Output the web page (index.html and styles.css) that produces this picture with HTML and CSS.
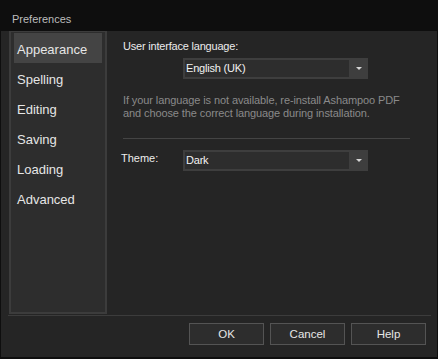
FILE: index.html
```html
<!DOCTYPE html>
<html>
<head>
<meta charset="utf-8">
<link rel="stylesheet" href="styles.css">
</head>
<body>
<div class="window">
  <div class="titlebar">Preferences</div>
  <div class="frame">
    <div class="main">
      <div class="sidebar">
        <div class="nav-item selected">Appearance</div>
        <div class="nav-item">Spelling</div>
        <div class="nav-item">Editing</div>
        <div class="nav-item">Saving</div>
        <div class="nav-item">Loading</div>
        <div class="nav-item">Advanced</div>
      </div>
      <div class="content">
        <div class="label">User interface language:</div>
        <div class="combo lang-combo">
          <div class="combo-field">English (UK)</div>
          <div class="combo-arrow"><span class="tri"></span></div>
        </div>
        <div class="info">If your language is not available, re-install Ashampoo PDF<br>and choose the correct language during installation.</div>
        <div class="hsep"></div>
        <div class="theme-row">
          <div class="theme-label">Theme:</div>
          <div class="combo">
            <div class="combo-field">Dark</div>
            <div class="combo-arrow"><span class="tri"></span></div>
          </div>
        </div>
      </div>
    </div>
    <div class="footer-sep"></div>
    <div class="buttons">
      <button class="btn">OK</button>
      <button class="btn">Cancel</button>
      <button class="btn">Help</button>
    </div>
  </div>
</div>
</body>
</html>
```

FILE: styles.css
```css
* { box-sizing: border-box; }
html, body { margin: 0; padding: 0; background: #0e0e0e; }
body {
  font-family: "Liberation Sans", Arial, sans-serif;
  font-size: 11px;
  color: #e4e4e4;
}
.window {
  width: 438px;
  height: 359px;
  display: flex;
  flex-direction: column;
  background: #0e0e0e;
  padding: 0 1px 2px 1px;
}
.titlebar {
  height: 31px;
  padding: 12px 0 0 11px;
  line-height: 14px;
  color: #bdbdbd;
  flex: none;
}
.frame {
  flex: 1;
  background: #252525;
  display: flex;
  flex-direction: column;
}
.main {
  height: 284px;
  display: flex;
  flex: none;
}
.sidebar {
  margin-left: 8px;
  width: 98px;
  height: 283px;
  background: #2d2d2d;
  border: 2px solid #3c3c3c;
  border-top-width: 1px;
  padding: 1px 3px 0 3px;
  flex: none;
}
.nav-item {
  height: 30px;
  padding: 3px 0 0 3px;
  line-height: 27px;
  font-size: 13px;
  color: #e6e6e6;
}
.nav-item.selected { background: #444444; }
.content {
  flex: 1;
  padding: 9px 27px 0 16px;
  display: flex;
  flex-direction: column;
}
.label {
  line-height: 13px;
  color: #ececec;
  letter-spacing: -0.2px;
}
.combo {
  width: 185px;
  height: 21px;
  background: #3e3e3e;
  padding: 2px 0 2px 2px;
  display: flex;
  flex: none;
}
.lang-combo { margin: 5px 0 0 60px; }
.combo-field {
  width: 164px;
  background: #2d2d2d;
  color: #f2f2f2;
  line-height: 17px;
  padding-left: 1px;
  letter-spacing: -0.2px;
}
.combo-arrow {
  flex: 1;
  display: flex;
  align-items: center;
  justify-content: center;
}
.tri {
  width: 0;
  height: 0;
  border-left: 3px solid transparent;
  border-right: 3px solid transparent;
  border-top: 3px solid #d6d6d6;
  margin-left: 1px;
}
.info {
  margin-top: 15px;
  line-height: 13px;
  color: #8a8a8a;
  letter-spacing: -0.1px;
}
.hsep {
  margin-top: 18px;
  height: 1px;
  background: #444444;
  flex: none;
}
.theme-row {
  margin-top: 11px;
  display: flex;
  align-items: flex-start;
}
.theme-label {
  width: 62px;
  margin-left: -2px;
  padding-top: 2px;
  line-height: 13px;
  color: #ececec;
}
.footer-sep {
  height: 1px;
  margin: 0 6px 0 7px;
  background: #3c3c3c;
  flex: none;
}
.buttons {
  display: flex;
  justify-content: flex-end;
  gap: 6px;
  padding: 7px 11px 0 0;
}
.btn {
  width: 75px;
  height: 22px;
  background: #2d2d2d;
  border: 1px solid #545454;
  color: #e6e6e6;
  font-family: "Liberation Sans", Arial, sans-serif;
  font-size: 11.5px;
  padding: 0;
}
```
